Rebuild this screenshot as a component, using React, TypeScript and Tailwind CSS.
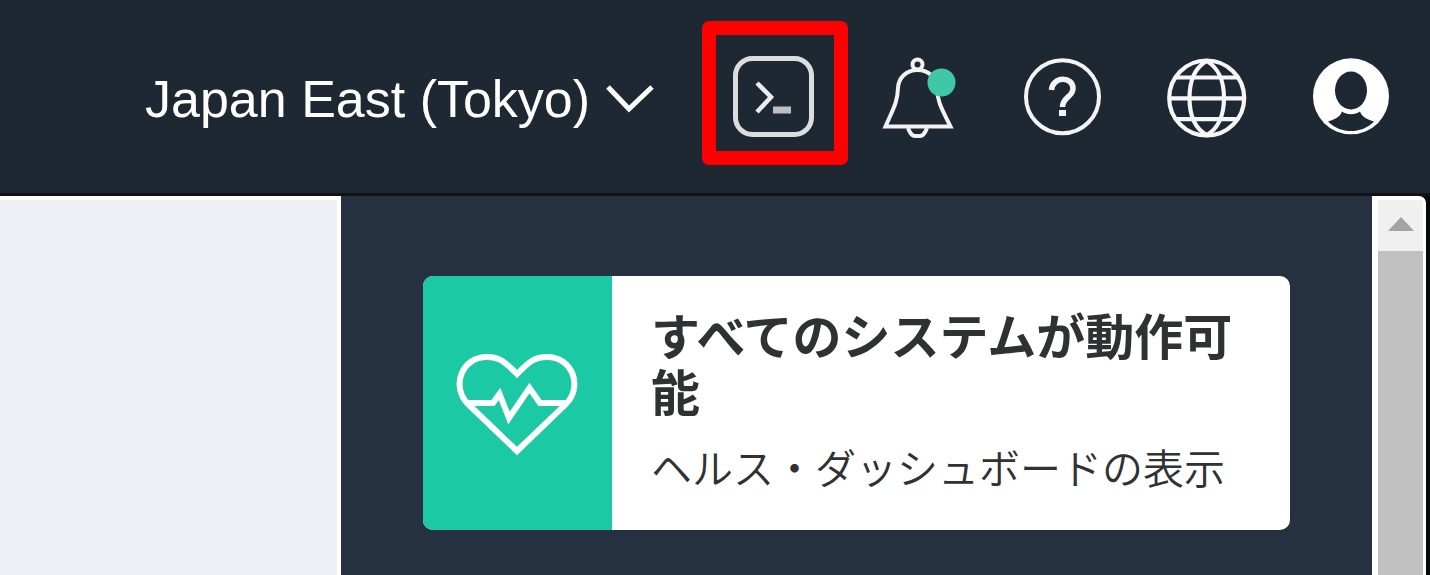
import React from 'react';

const iconButton = 'block shrink-0 cursor-pointer';

function RegionSelect() {
  return (
    <div className="relative mr-[44px] flex items-center">
      <select
        aria-label="Region"
        className="h-[80px] appearance-none bg-transparent pt-3 pr-[67px] text-[52px] leading-[64px] text-white"
      >
        <option>Japan East (Tokyo)</option>
      </select>
      <svg
        className="pointer-events-none absolute top-[26px] right-0"
        width="56"
        height="40"
        viewBox="0 0 56 40"
        fill="none"
        stroke="#fff"
        strokeWidth="5"
        aria-hidden="true"
      >
        <path d="M6 8 L27 30 L50 8" />
      </svg>
    </div>
  );
}

function TerminalIcon() {
  return (
    <svg width="118" height="116" viewBox="0 0 118 116" fill="none" aria-hidden="true">
      <rect x="19.500" y="23.500" width="76" height="76" rx="17" stroke="#dcdddf" strokeWidth="5" />
      <path d="M41 48 L55 62 L41 77" stroke="#ececed" strokeWidth="4.500" />
      <path d="M57 75 H75" stroke="#bcbec1" strokeWidth="7" />
    </svg>
  );
}

function BellIcon() {
  return (
    <svg width="88" height="96" viewBox="0 0 88 96" fill="none" aria-hidden="true">
      <g stroke="#f2f2f3" strokeWidth="4">
        <circle cx="42.500" cy="19.500" r="5" />
        <path d="M42.500 25 C31 25 23.500 33 23 43 C22.500 58 18 64 10.500 81.500 H75.500 C67 64 62.500 58 62 43 C61.500 33 54 25 42.500 25 Z" />
        <path d="M33 83 Q36 91 40 91 H45 Q49 91 52 83" />
      </g>
      <circle cx="66.500" cy="37.500" r="14" fill="#3fc8a6" />
    </svg>
  );
}

function HelpIcon() {
  return (
    <svg width="88" height="96" viewBox="0 0 88 96" fill="none" stroke="#f4f4f5" aria-hidden="true">
      <circle cx="43.500" cy="51.700" r="36.500" strokeWidth="4" />
      <path d="M32.500 45 C33.500 31 54 31 54 43.500 C54 52 43.500 52 43.500 62" strokeWidth="5.500" />
      <path d="M43.500 65 V71" strokeWidth="7" />
    </svg>
  );
}

function GlobeIcon() {
  return (
    <svg width="88" height="96" viewBox="0 0 88 96" fill="none" stroke="#f6f6f7" strokeWidth="4.200" aria-hidden="true">
      <circle cx="43.700" cy="53" r="37.500" />
      <path d="M43.700 16 C33 22 26.500 35 26.500 53 S33 84 43.700 90 C54.400 84 61 71 61 53 S54.400 22 43.700 16 Z" />
      <path d="M13 32.500 H74 M7 53.300 H80 M13 74.200 H74" />
    </svg>
  );
}

function ProfileIcon() {
  return (
    <svg width="88" height="96" viewBox="0 0 88 96" aria-hidden="true">
      <circle cx="44" cy="51.300" r="38" fill="#fff" />
      <ellipse cx="44" cy="45.500" rx="16" ry="19" fill="#1e2833" />
      <path
        d="M21 76.500 C27 74.500 33 72.500 35 66.500 C40 70 48 70 53 66.500 C55 72.500 61 74.500 67 76.500 C60 83.500 52 86 44 86 S28 83.500 21 76.500 Z"
        fill="#1e2833"
      />
    </svg>
  );
}

function HeartPulseIcon() {
  return (
    <svg width="126" height="106" viewBox="0 0 126 106" fill="none" stroke="#fff" strokeWidth="6" aria-hidden="true">
      <path d="M62 101 L13 54 C-4 37 6 7 32 7 C45 7 50 12 62 24 C74 12 79 7 92 7 C118 7 128 37 111 54 Z" />
      <path d="M11 53 H38 L44.500 44 L54 68 L74.500 38 L85 53 H113" />
    </svg>
  );
}

export default function App() {
  return (
    <div
      lang="ja"
      className="flex min-h-screen flex-col bg-[#253041] font-['Liberation_Sans','Noto_Sans_CJK_JP',sans-serif]"
    >
      <header className="flex items-center justify-end border-b-3 border-[#111215] bg-[#1e2833] pt-[21px] pr-[35px] pb-[28px]">
        <RegionSelect />
        <button
          type="button"
          aria-label="Cloud Shell"
          className="mr-[27px] block shrink-0 cursor-pointer rounded-[7px] bg-[#ff0000] p-[14px]"
        >
          <span className="block bg-[#1e2833]">
            <TerminalIcon />
          </span>
        </button>
        <div className="flex items-center gap-14">
          <button type="button" aria-label="Announcements" className={iconButton}>
            <BellIcon />
          </button>
          <button type="button" aria-label="Help" className={iconButton}>
            <HelpIcon />
          </button>
          <button type="button" aria-label="Language" className={iconButton}>
            <GlobeIcon />
          </button>
          <button type="button" aria-label="Profile" className={iconButton}>
            <ProfileIcon />
          </button>
        </div>
      </header>

      <div className="grid flex-1 grid-cols-[341fr_1031fr_58px]">
        <main className="border-t-4 border-r-4 border-white bg-[#eff0f5]" />

        <aside className="px-[82px] pt-20 pb-10">
          <a href="#health" className="flex overflow-hidden rounded-[10px] bg-white">
            <span className="flex w-[189px] shrink-0 items-center justify-center bg-[#1bcaa5]">
              <HeartPulseIcon />
            </span>
            <span className="block pt-[34px] pr-7 pb-8 pl-[39px] text-[#2f3133]">
              <strong className="block text-[49px] leading-[56px] font-bold">
                すべてのシステムが動作可能
              </strong>
              <span className="mt-5 block text-[41px] leading-[56px] font-[350]">
                ヘルス・ダッシュボードの表示
              </span>
            </span>
          </a>
        </aside>

        <div className="flex bg-[#08090b] pr-1">
          <div className="flex flex-1 flex-col rounded-tr-[7px] border-t-4 border-r-3 border-l-6 border-white bg-[#f0f0f0]">
            <button
              type="button"
              aria-label="Scroll up"
              className="flex h-[51px] items-center justify-center pb-1"
            >
              <svg width="26" height="14" viewBox="0 0 26 14" aria-hidden="true">
                <path d="M13 0 L26 14 H0 Z" fill="#a3a3a3" />
              </svg>
            </button>
            <div className="flex-1 bg-[#c1c1c1]" />
          </div>
        </div>
      </div>
    </div>
  );
}
